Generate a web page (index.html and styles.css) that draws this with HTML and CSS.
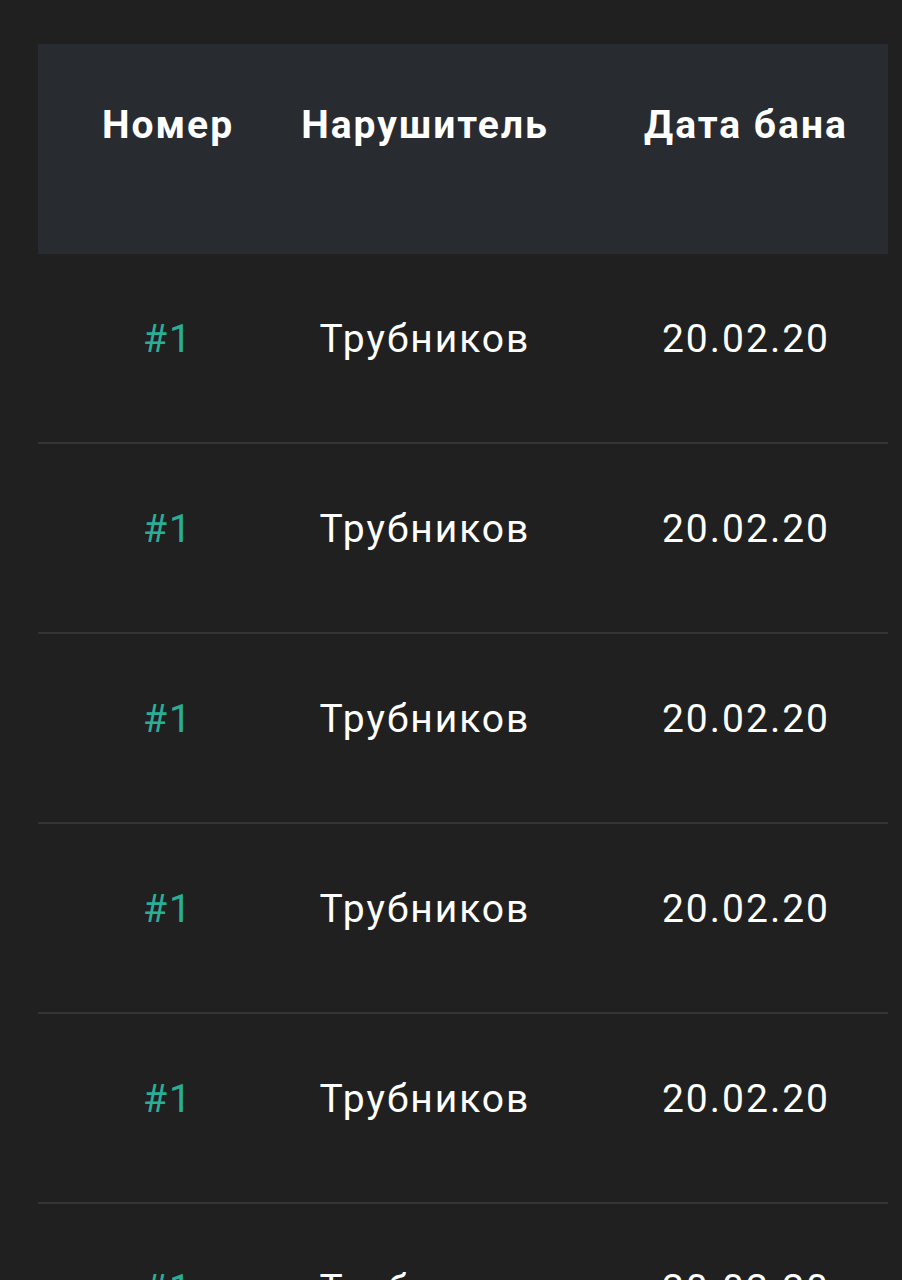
FILE: index.html
```html
<!DOCTYPE html>
<html lang="ru">
<head>
<meta charset="utf-8">
<title>Баны</title>
<link rel="stylesheet" href="styles.css">
</head>
<body>
<div class="table">
  <div class="row head">
    <div class="cell c1">Номер</div>
    <div class="cell c2">Нарушитель</div>
    <div class="cell c3">Дата бана</div>
  </div>
  <div class="row">
    <div class="cell c1 num">#1</div>
    <div class="cell c2">Трубников</div>
    <div class="cell c3">20.02.20</div>
  </div>
  <div class="row">
    <div class="cell c1 num">#1</div>
    <div class="cell c2">Трубников</div>
    <div class="cell c3">20.02.20</div>
  </div>
  <div class="row">
    <div class="cell c1 num">#1</div>
    <div class="cell c2">Трубников</div>
    <div class="cell c3">20.02.20</div>
  </div>
  <div class="row">
    <div class="cell c1 num">#1</div>
    <div class="cell c2">Трубников</div>
    <div class="cell c3">20.02.20</div>
  </div>
  <div class="row">
    <div class="cell c1 num">#1</div>
    <div class="cell c2">Трубников</div>
    <div class="cell c3">20.02.20</div>
  </div>
  <div class="row">
    <div class="cell c1 num">#1</div>
    <div class="cell c2">Трубников</div>
    <div class="cell c3">20.02.20</div>
  </div>
</div>
</body>
</html>
```
FILE: styles.css
```css
html, body {
  margin: 0;
  background: #202020;
  overflow: hidden;
}
body {
  padding: 44px 14px 0 38px;
  font-family: Roboto, "Noto Sans", sans-serif;
  color: #ffffff;
  height: 1280px;
  box-sizing: border-box;
}
.table {
  width: 850px;
}
.row {
  display: grid;
  grid-template-columns: 258px 256px 336px;
  align-items: center;
  height: 190px;
  box-sizing: border-box;
  padding-bottom: 18px;
  border-bottom: 2px solid #353535;
  font-size: 39px;
  letter-spacing: 2px;
}
.row.head {
  height: 210px;
  padding-bottom: 48px;
  border-bottom: none;
  background: #282c31;
  font-weight: 700;
}
.cell {
  text-align: center;
  line-height: 1.2;
  padding-left: 2px;
}
.c3 {
  padding-left: 52px;
}
.num {
  color: #2aae95;
}
```
